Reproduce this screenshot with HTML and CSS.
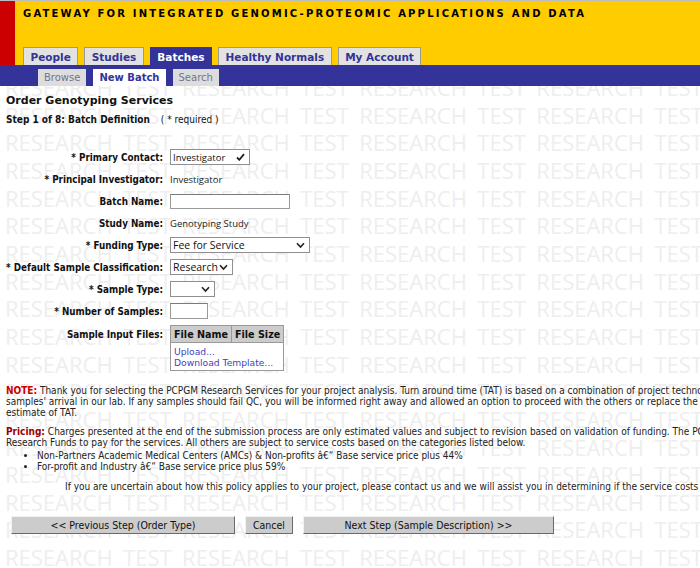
FILE: index.html
```html
<!DOCTYPE html>
<html>
<head>
<meta charset="utf-8">
<title>Order Genotyping Services</title>
<link rel="stylesheet" href="styles.css">
</head>
<body>
<div class="wm" aria-hidden="true">
<div>RESEARCH TEST RESEARCH TEST RESEARCH TEST RESEARCH TEST</div>
<div>RESEARCH TEST RESEARCH TEST RESEARCH TEST RESEARCH TEST</div>
<div>RESEARCH TEST RESEARCH TEST RESEARCH TEST RESEARCH TEST</div>
<div>RESEARCH TEST RESEARCH TEST RESEARCH TEST RESEARCH TEST</div>
<div>RESEARCH TEST RESEARCH TEST RESEARCH TEST RESEARCH TEST</div>
<div>RESEARCH TEST RESEARCH TEST RESEARCH TEST RESEARCH TEST</div>
<div>RESEARCH TEST RESEARCH TEST RESEARCH TEST RESEARCH TEST</div>
<div>RESEARCH TEST RESEARCH TEST RESEARCH TEST RESEARCH TEST</div>
<div>RESEARCH TEST RESEARCH TEST RESEARCH TEST RESEARCH TEST</div>
<div>RESEARCH TEST RESEARCH TEST RESEARCH TEST RESEARCH TEST</div>
<div>RESEARCH TEST RESEARCH TEST RESEARCH TEST RESEARCH TEST</div>
<div>RESEARCH TEST RESEARCH TEST RESEARCH TEST RESEARCH TEST</div>
<div>RESEARCH TEST RESEARCH TEST RESEARCH TEST RESEARCH TEST</div>
<div>RESEARCH TEST RESEARCH TEST RESEARCH TEST RESEARCH TEST</div>
<div>RESEARCH TEST RESEARCH TEST RESEARCH TEST RESEARCH TEST</div>
<div>RESEARCH TEST RESEARCH TEST RESEARCH TEST RESEARCH TEST</div>
<div>RESEARCH TEST RESEARCH TEST RESEARCH TEST RESEARCH TEST</div>
<div>RESEARCH TEST RESEARCH TEST RESEARCH TEST RESEARCH TEST</div>
<div>RESEARCH TEST RESEARCH TEST RESEARCH TEST RESEARCH TEST</div>
<div>RESEARCH TEST RESEARCH TEST RESEARCH TEST RESEARCH TEST</div>
<div>RESEARCH TEST RESEARCH TEST RESEARCH TEST RESEARCH TEST</div>
<div>RESEARCH TEST RESEARCH TEST RESEARCH TEST RESEARCH TEST</div>
</div>

<header class="masthead">
  <div class="brand-bar"></div>
  <div class="brand">
    <div class="title">GATEWAY FOR INTEGRATED GENOMIC-PROTEOMIC APPLICATIONS AND DATA</div>
    <nav class="tabs">
      <a class="tab">People</a>
      <a class="tab">Studies</a>
      <a class="tab active">Batches</a>
      <a class="tab">Healthy Normals</a>
      <a class="tab">My Account</a>
    </nav>
  </div>
</header>
<nav class="subnav">
  <a class="subtab">Browse</a>
  <a class="subtab active">New Batch</a>
  <a class="subtab">Search</a>
</nav>

<main class="content">
  <h1>Order Genotyping Services</h1>
  <div class="step"><b>Step 1 of 8: Batch Definition</b><span class="req">( * required )</span></div>

  <div class="form">
    <div class="lbl">* Primary Contact:</div>
    <div><span class="sel w80"><select><option>Investigator</option></select><svg width="9" height="8" viewBox="0 0 9 8"><path d="M1 4.5 L3.3 6.8 L8 1.2" fill="none" stroke="#222" stroke-width="1.8"/></svg></span></div>

    <div class="lbl">* Principal Investigator:</div>
    <div class="val">Investigator</div>

    <div class="lbl">Batch Name:</div>
    <div><input class="txt w120" type="text"></div>

    <div class="lbl">Study Name:</div>
    <div class="val">Genotyping Study</div>

    <div class="lbl">* Funding Type:</div>
    <div><span class="sel w140"><select class="big"><option>Fee for Service</option></select><svg width="9" height="7" viewBox="0 0 9 7"><path d="M1 1.2 L4.5 5 L8 1.2" fill="none" stroke="#222" stroke-width="1.6"/></svg></span></div>

    <div class="lbl">* Default Sample Classification:</div>
    <div><span class="sel w63"><select class="big"><option>Research</option></select><svg width="9" height="7" viewBox="0 0 9 7"><path d="M1 1.2 L4.5 5 L8 1.2" fill="none" stroke="#222" stroke-width="1.6"/></svg></span></div>

    <div class="lbl">* Sample Type:</div>
    <div><span class="sel w45"><select class="big"><option></option></select><svg width="9" height="7" viewBox="0 0 9 7"><path d="M1 1.2 L4.5 5 L8 1.2" fill="none" stroke="#222" stroke-width="1.6"/></svg></span></div>

    <div class="lbl">* Number of Samples:</div>
    <div><input class="txt w38" type="text"></div>

    <div class="lbl top">Sample Input Files:</div>
    <div>
      <table class="files">
        <thead><tr><th>File Name</th><th>File Size</th></tr></thead>
        <tbody><tr><td colspan="2"><a>Upload...</a><br><a>Download Template...</a></td></tr></tbody>
      </table>
    </div>
  </div>

  <p class="note"><b class="note-k">NOTE:</b> Thank you for selecting the PCPGM Research Services for your project analysis. Turn around time (TAT) is based on a combination of project technology and sample number, and starts upon<br>samples' arrival in our lab. If any samples should fail QC, you will be informed right away and allowed an option to proceed with the others or replace the failed samples, which may affect the<br>estimate of TAT.</p>

  <p class="pricing"><b class="price-k">Pricing:</b> Charges presented at the end of the submission process are only estimated values and subject to revision based on validation of funding. The PCPGM only accepts Partners<br>Research Funds to pay for the services. All others are subject to service costs based on the categories listed below.</p>
  <ul class="bullets">
    <li>Non-Partners Academic Medical Centers (AMCs) &amp; Non-profits â€“ Base service price plus 44%</li>
    <li>For-profit and Industry â€“ Base service price plus 59%</li>
  </ul>
  <p class="uncertain">If you are uncertain about how this policy applies to your project, please contact us and we will assist you in determining if the service costs apply.</p>

  <div class="buttons">
    <button class="btn w224">&lt;&lt; Previous Step (Order Type)</button>
    <button class="btn w48">Cancel</button>
    <button class="btn w251">Next Step (Sample Description) &gt;&gt;</button>
  </div>
</main>
</body>
</html>
```

FILE: styles.css
```css
html {
  margin: 0;
  padding: 0;
  overflow: hidden;
  background: #fff;
}
body {
  position: relative;
  margin: 0;
  padding: 0;
  width: 700px;
  height: 568px;
  overflow: hidden;
  font-family: "DejaVu Sans Condensed", "DejaVu Sans", sans-serif;
  font-size: 10px;
  color: #222;
}

/* watermark background text */
.wm {
  position: absolute;
  top: -9px;
  left: 0;
  width: 700px;
  height: 577px;
  overflow: hidden;
  z-index: -1;
  padding-left: 5px;
  font-family: "Open Sans", sans-serif;
  font-size: 22px;
  line-height: 27.65px;
  color: #eeeeee;
  white-space: nowrap;
  word-spacing: 4.75px;
  box-sizing: border-box;
}

/* masthead */
.masthead {
  display: flex;
  height: 64px;
  border-top: 1px solid #bdbdbd;
}
.brand-bar {
  width: 15px;
  background: #cc0000;
}
.brand {
  flex: 1;
  background: #ffcc00;
  display: flex;
  flex-direction: column;
  justify-content: space-between;
  padding-left: 8px;
}
.title {
  margin-top: 7px;
  font-family: "DejaVu Sans", sans-serif;
  font-weight: bold;
  font-size: 10px;
  letter-spacing: 2.2px;
  color: #000;
  white-space: nowrap;
}
.tabs {
  display: flex;
  gap: 6px;
  align-items: flex-end;
}
.tab {
  height: 17px;
  line-height: 18px;
  padding: 0 6.5px;
  border: 1px solid #9a9a9a;
  border-bottom: 0;
  background: #e2e2e2;
  color: #333399;
  font-family: "DejaVu Sans", sans-serif;
  font-weight: bold;
  font-size: 10.5px;
}
.tab.active {
  background: #333399;
  border-color: #333399;
  color: #fff;
}

.subnav {
  display: flex;
  gap: 7px;
  align-items: flex-end;
  height: 21px;
  padding-left: 38px;
  background: #333399;
}
.subtab {
  height: 17px;
  line-height: 18px;
  padding: 0 6px;
  background: #dddddd;
  color: #74748c;
  font-family: "DejaVu Sans", sans-serif;
  font-size: 10px;
}
.subtab.active {
  background: #fff;
  color: #333399;
  font-weight: bold;
}

/* content */
.content {
  padding-left: 6px;
}
h1 {
  margin: 7px 0 0;
  font-family: "DejaVu Sans", sans-serif;
  font-size: 11px;
  line-height: 15px;
  font-weight: bold;
  color: #111;
}
.step {
  margin-top: 5px;
  line-height: 13px;
  font-size: 10px;
  color: #111;
}
.req {
  margin-left: 11px;
}

.form {
  display: grid;
  grid-template-columns: 157px auto;
  grid-auto-rows: minmax(22px, auto);
  column-gap: 7px;
  align-items: center;
  margin-top: 20px;
}
.lbl {
  text-align: right;
  font-weight: bold;
  font-size: 9.8px;
  color: #111;
  white-space: nowrap;
}
.lbl.top {
  align-self: start;
  margin-top: 7px;
}
.val {
  font-family: "Open Sans", sans-serif;
  font-size: 9.5px;
  color: #222;
}

.sel {
  display: inline-flex;
  align-items: center;
  height: 14px;
  border: 1px solid #8f8f8f;
  background: #fff;
  box-sizing: content-box;
  vertical-align: middle;
}
.sel select {
  flex: 1;
  min-width: 0;
  appearance: none;
  -webkit-appearance: none;
  border: 0;
  outline: 0;
  background: transparent;
  padding: 0 0 0 2px;
  margin: 0;
  height: 14px;
  font-family: "Open Sans", sans-serif;
  font-size: 9.5px;
  color: #111;
}
.sel select.big {
  font-size: 10.5px;
}
.sel svg {
  flex: none;
  margin-right: 4px;
}
.w80 { width: 78px; }
.w140 { width: 138px; }
.w63 { width: 61px; }
.w45 { width: 43px; }

.txt {
  display: block;
  height: 13px;
  margin: 0;
  padding: 0;
  border: 1px solid #9a9a9a;
  border-top-color: #7a7a7a;
  background: #fff;
}
.txt.w120 { width: 118px; }
.txt.w38 { width: 36px; height: 14px; }

.files {
  border-collapse: collapse;
  margin-top: 3px;
}
.files th {
  background: #cccccc;
  border: 1px solid #999;
  height: 16px;
  padding: 0 3px;
  font-family: "DejaVu Sans", sans-serif;
  font-weight: bold;
  font-size: 9.6px;
  color: #111;
  white-space: nowrap;
}
.files td {
  background: #fff;
  border: 1px solid #999;
  padding: 3px 3px 2px;
  line-height: 11px;
  font-family: "DejaVu Sans", sans-serif;
  font-size: 9.2px;
}
.files a {
  color: #3f3fc0;
}

.note, .pricing, .uncertain {
  margin: 0;
  line-height: 11px;
  white-space: nowrap;
  color: #222;
}
.note { margin-top: 14px; }
.pricing { margin-top: 8px; }
.note-k { color: #cc0000; }
.price-k { color: #990000; }
.bullets {
  margin: 2px 0 0;
  padding-left: 31px;
  line-height: 11px;
  white-space: nowrap;
}
.uncertain {
  margin-top: 9px;
  padding-left: 59px;
}

.buttons {
  display: flex;
  gap: 10px;
  margin-top: 24px;
  padding-left: 5px;
}
.btn {
  height: 18px;
  padding: 0;
  margin: 0;
  background: #cccccc;
  border: 1px solid;
  border-color: #f2f2f2 #6a6a6a #6a6a6a #f2f2f2;
  font-family: "DejaVu Sans Condensed", "DejaVu Sans", sans-serif;
  font-size: 10.5px;
  color: #111;
}
.w224 { width: 224px; }
.w48 { width: 48px; }
.w251 { width: 251px; }
```
